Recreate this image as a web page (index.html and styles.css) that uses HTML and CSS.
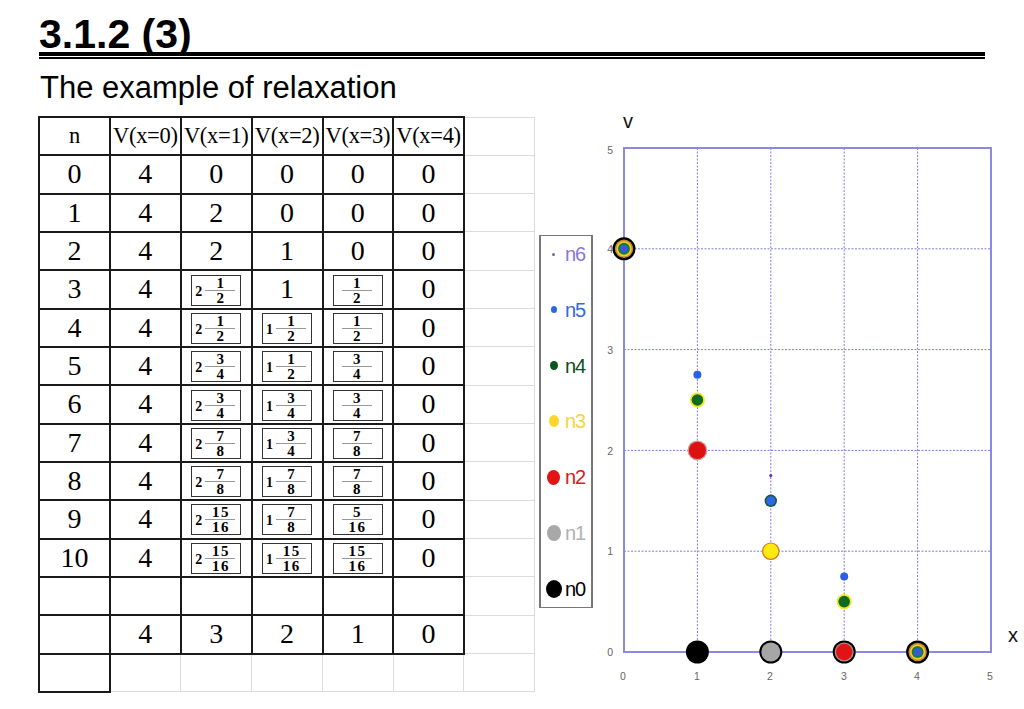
FILE: index.html
```html
<!DOCTYPE html>
<html>
<head>
<meta charset="utf-8">
<link rel="stylesheet" href="styles.css">
</head>
<body>
<header class="header">
  <h1 class="title">3.1.2 (3)</h1>
  <div class="rule"></div>
  <p class="subtitle">The example of relaxation</p>
</header>
<main class="main">
  <table class="grid">
    <colgroup>
      <col class="c71"><col class="c71"><col class="c71"><col class="c71"><col class="c70"><col class="c71"><col class="c70">
    </colgroup>
    <tr class="head"><td>n</td><td>V(x=0)</td><td>V(x=1)</td><td>V(x=2)</td><td>V(x=3)</td><td>V(x=4)</td><td class="faint"></td></tr>
    <tr><td>0</td><td>4</td><td>0</td><td>0</td><td>0</td><td>0</td><td class="faint"></td></tr>
    <tr><td>1</td><td>4</td><td>2</td><td>0</td><td>0</td><td>0</td><td class="faint"></td></tr>
    <tr><td>2</td><td>4</td><td>2</td><td>1</td><td>0</td><td>0</td><td class="faint"></td></tr>
    <tr><td>3</td><td>4</td>
      <td><span class="fbox"><span class="whole">2</span><span class="frac"><span class="num">1</span><span class="den">2</span></span></span></td>
      <td>1</td>
      <td><span class="fbox"><span class="frac"><span class="num">1</span><span class="den">2</span></span></span></td>
      <td>0</td><td class="faint"></td></tr>
    <tr><td>4</td><td>4</td>
      <td><span class="fbox"><span class="whole">2</span><span class="frac"><span class="num">1</span><span class="den">2</span></span></span></td>
      <td><span class="fbox"><span class="whole">1</span><span class="frac"><span class="num">1</span><span class="den">2</span></span></span></td>
      <td><span class="fbox"><span class="frac"><span class="num">1</span><span class="den">2</span></span></span></td>
      <td>0</td><td class="faint"></td></tr>
    <tr><td>5</td><td>4</td>
      <td><span class="fbox"><span class="whole">2</span><span class="frac"><span class="num">3</span><span class="den">4</span></span></span></td>
      <td><span class="fbox"><span class="whole">1</span><span class="frac"><span class="num">1</span><span class="den">2</span></span></span></td>
      <td><span class="fbox"><span class="frac"><span class="num">3</span><span class="den">4</span></span></span></td>
      <td>0</td><td class="faint"></td></tr>
    <tr><td>6</td><td>4</td>
      <td><span class="fbox"><span class="whole">2</span><span class="frac"><span class="num">3</span><span class="den">4</span></span></span></td>
      <td><span class="fbox"><span class="whole">1</span><span class="frac"><span class="num">3</span><span class="den">4</span></span></span></td>
      <td><span class="fbox"><span class="frac"><span class="num">3</span><span class="den">4</span></span></span></td>
      <td>0</td><td class="faint"></td></tr>
    <tr><td>7</td><td>4</td>
      <td><span class="fbox"><span class="whole">2</span><span class="frac"><span class="num">7</span><span class="den">8</span></span></span></td>
      <td><span class="fbox"><span class="whole">1</span><span class="frac"><span class="num">3</span><span class="den">4</span></span></span></td>
      <td><span class="fbox"><span class="frac"><span class="num">7</span><span class="den">8</span></span></span></td>
      <td>0</td><td class="faint"></td></tr>
    <tr><td>8</td><td>4</td>
      <td><span class="fbox"><span class="whole">2</span><span class="frac"><span class="num">7</span><span class="den">8</span></span></span></td>
      <td><span class="fbox"><span class="whole">1</span><span class="frac"><span class="num">7</span><span class="den">8</span></span></span></td>
      <td><span class="fbox"><span class="frac"><span class="num">7</span><span class="den">8</span></span></span></td>
      <td>0</td><td class="faint"></td></tr>
    <tr><td>9</td><td>4</td>
      <td><span class="fbox"><span class="whole">2</span><span class="frac"><span class="num">15</span><span class="den">16</span></span></span></td>
      <td><span class="fbox"><span class="whole">1</span><span class="frac"><span class="num">7</span><span class="den">8</span></span></span></td>
      <td><span class="fbox"><span class="frac"><span class="num">5</span><span class="den">16</span></span></span></td>
      <td>0</td><td class="faint"></td></tr>
    <tr><td>10</td><td>4</td>
      <td><span class="fbox"><span class="whole">2</span><span class="frac"><span class="num">15</span><span class="den">16</span></span></span></td>
      <td><span class="fbox"><span class="whole">1</span><span class="frac"><span class="num">15</span><span class="den">16</span></span></span></td>
      <td><span class="fbox"><span class="frac"><span class="num">15</span><span class="den">16</span></span></span></td>
      <td>0</td><td class="faint"></td></tr>
    <tr><td></td><td></td><td></td><td></td><td></td><td></td><td class="faint"></td></tr>
    <tr><td></td><td>4</td><td>3</td><td>2</td><td>1</td><td>0</td><td class="faint"></td></tr>
    <tr><td></td><td class="faint"></td><td class="faint"></td><td class="faint"></td><td class="faint"></td><td class="faint"></td><td class="faint"></td></tr>
  </table>

  <ul class="legend">
    <li class="item n6"><span class="dot-slot"><span class="dot"></span></span><span class="lbl">n6</span></li>
    <li class="item n5"><span class="dot-slot"><span class="dot"></span></span><span class="lbl">n5</span></li>
    <li class="item n4"><span class="dot-slot"><span class="dot"></span></span><span class="lbl">n4</span></li>
    <li class="item n3"><span class="dot-slot"><span class="dot"></span></span><span class="lbl">n3</span></li>
    <li class="item n2"><span class="dot-slot"><span class="dot"></span></span><span class="lbl">n2</span></li>
    <li class="item n1"><span class="dot-slot"><span class="dot"></span></span><span class="lbl">n1</span></li>
    <li class="item n0"><span class="dot-slot"><span class="dot"></span></span><span class="lbl">n0</span></li>
  </ul>

  <svg class="chart" width="434" height="590" viewBox="590 110 434 590" xmlns="http://www.w3.org/2000/svg">
    <g class="gridlines">
      <line x1="695.4" y1="148" x2="695.4" y2="652"/>
      <line x1="768.8" y1="148" x2="768.8" y2="652"/>
      <line x1="842.2" y1="148" x2="842.2" y2="652"/>
      <line x1="915.6" y1="148" x2="915.6" y2="652"/>
      <line x1="622" y1="248.8" x2="989" y2="248.8"/>
      <line x1="622" y1="349.6" x2="989" y2="349.6"/>
      <line x1="622" y1="450.4" x2="989" y2="450.4"/>
      <line x1="622" y1="551.2" x2="989" y2="551.2"/>
    </g>
    <rect class="frame" x="622" y="148" width="367" height="504"/>
    <g class="ticks">
      <text x="611" y="154" text-anchor="end">5</text>
      <text x="611" y="253" text-anchor="end">4</text>
      <text x="611" y="354" text-anchor="end">3</text>
      <text x="611" y="455" text-anchor="end">2</text>
      <text x="611" y="555" text-anchor="end">1</text>
      <text x="611" y="656" text-anchor="end">0</text>
      <text x="621" y="680" text-anchor="middle">0</text>
      <text x="695" y="680" text-anchor="middle">1</text>
      <text x="768" y="680" text-anchor="middle">2</text>
      <text x="842" y="680" text-anchor="middle">3</text>
      <text x="915" y="680" text-anchor="middle">4</text>
      <text x="988" y="680" text-anchor="middle">5</text>
    </g>
    <text class="axis" x="626" y="128" text-anchor="middle">v</text>
    <text class="axis" x="1011" y="642" text-anchor="middle">x</text>

    <!-- (0,4) all nodes -->
    <circle cx="622" cy="248.8" r="11.5" fill="#000"/>
    <circle cx="622" cy="248.8" r="9.2" fill="#c98a3a"/>
    <circle cx="622" cy="248.8" r="7.6" fill="#f2d21e"/>
    <circle cx="622" cy="248.8" r="6" fill="#1f7a3a"/>
    <circle cx="622" cy="248.8" r="3.8" fill="#2a5fe6"/>
    <circle cx="622" cy="248.8" r="1.4" fill="#6a40c0"/>
    <!-- (4,0) -->
    <circle cx="915.6" cy="652" r="11.5" fill="#000"/>
    <circle cx="915.6" cy="652" r="9.2" fill="#c98a3a"/>
    <circle cx="915.6" cy="652" r="7.6" fill="#f2d21e"/>
    <circle cx="915.6" cy="652" r="6" fill="#1f7a3a"/>
    <circle cx="915.6" cy="652" r="3.8" fill="#2a5fe6"/>
    <circle cx="915.6" cy="652" r="1.4" fill="#6a40c0"/>
    <!-- (1,0) n0 -->
    <circle cx="695.4" cy="652" r="11.5" fill="#000"/>
    <!-- (2,0) n0 n1 -->
    <circle cx="768.8" cy="652" r="11.5" fill="#000"/>
    <circle cx="768.8" cy="652" r="9.5" fill="#a6a6a6"/>
    <!-- (3,0) n0 n1 n2 -->
    <circle cx="842.2" cy="652" r="11.5" fill="#000"/>
    <circle cx="842.2" cy="652" r="9.5" fill="#b08a8a"/>
    <circle cx="842.2" cy="652" r="8.2" fill="#e01414"/>
    <!-- (1,2) n1 n2 -->
    <circle cx="695.4" cy="450.4" r="10" fill="#c8a0a0"/>
    <circle cx="695.4" cy="450.4" r="8.6" fill="#de1010"/>
    <!-- (1,2.5) n3 n4 -->
    <circle cx="695.4" cy="400" r="7.6" fill="#f5ea20"/>
    <circle cx="695.4" cy="400" r="5.8" fill="#0f6a22"/>
    <!-- (1,2.75) n5 -->
    <circle cx="695.4" cy="374.8" r="4" fill="#2a5fe6"/>
    <!-- (2,1) n2 n3 -->
    <circle cx="768.8" cy="551.2" r="8.8" fill="#e0701a"/>
    <circle cx="768.8" cy="551.2" r="7.6" fill="#ffea10"/>
    <!-- (2,1.5) n4 n5 -->
    <circle cx="768.8" cy="500.8" r="6.2" fill="#1a5a3a"/>
    <circle cx="768.8" cy="500.8" r="4.6" fill="#2a6ae8"/>
    <!-- (2,1.75) n6 -->
    <circle cx="768.8" cy="475.6" r="1.6" fill="#6a30c8"/>
    <!-- (3,0.5) n3 n4 -->
    <circle cx="842.2" cy="601.6" r="7.6" fill="#f5ea20"/>
    <circle cx="842.2" cy="601.6" r="5.8" fill="#0f6a22"/>
    <!-- (3,0.75) n5 -->
    <circle cx="842.2" cy="576.4" r="4" fill="#2a5fe6"/>
  </svg>
</main>
</body>
</html>
```

FILE: styles.css
```css
html, body {
  margin: 0;
  padding: 0;
  background: #fff;
}
body {
  width: 1024px;
  height: 709px;
  overflow: hidden;
  font-family: "Liberation Sans", Arial, sans-serif;
  color: #000;
}
.header {
  margin: 0 39px 0 39px;
}
.title {
  margin: 0;
  padding-top: 17px;
  font-size: 41px;
  line-height: 35px;
  font-weight: bold;
  white-space: nowrap;
}
.rule {
  height: 1px;
  border-top: 4px solid #000;
  border-bottom: 2px solid #000;
}
.subtitle {
  margin: 11px 0 0 1px;
  font-size: 31px;
  line-height: 36px;
  font-weight: normal;
}
.main {
  display: flex;
  align-items: flex-start;
  margin-top: 10px;
}
.grid {
  margin-left: 38px;
  border-collapse: collapse;
  table-layout: fixed;
  width: 495px;
  font-family: "Liberation Serif", "Times New Roman", serif;
  flex: none;
}
.c71 { width: 70.9px; }
.c70 { width: 70.5px; }
.grid tr {
  height: 38.33px;
}
.grid td {
  border: 2px solid #1a1a1a;
  padding: 0;
  text-align: center;
  vertical-align: middle;
  font-size: 28px;
  line-height: 1;
  overflow: hidden;
}
.grid .head td {
  font-size: 22.5px;
  letter-spacing: -0.3px;
  white-space: nowrap;
}
.grid td.faint {
  border: 1px solid #dcdcdc;
}
.fbox {
  display: inline-flex;
  align-items: center;
  justify-content: center;
  box-sizing: border-box;
  width: 50px;
  height: 31px;
  border: 1px solid #333;
  gap: 3px;
  vertical-align: middle;
  padding-right: 2px;
}
.whole {
  font-size: 14px;
  line-height: 14px;
  margin-top: 3px;
  font-weight: bold;
}
.frac {
  display: inline-flex;
  flex-direction: column;
  align-items: center;
  min-width: 30px;
}
.num, .den {
  font-size: 15px;
  line-height: 14px;
  font-weight: bold;
  letter-spacing: 1.5px;
  padding-left: 1.5px;
}
.num {
  border-bottom: 1px solid #999;
  align-self: stretch;
  text-align: center;
}
.legend {
  list-style: none;
  margin: 119px 0 0 4px;
  padding: 8px 0 5px 0;
  width: 54px;
  box-sizing: border-box;
  height: 373px;
  border: 2px solid #777;
  border-top-width: 1px;
  border-bottom-width: 1px;
  display: flex;
  flex-direction: column;
  gap: 35.8px;
  flex: none;
}
.item {
  display: flex;
  align-items: center;
  height: 20px;
}
.dot-slot {
  width: 18px;
  margin-left: 4px;
  display: flex;
  justify-content: center;
  align-items: center;
}
.dot {
  display: block;
  border-radius: 50%;
}
.lbl {
  margin-left: 2px;
  font-size: 20px;
  line-height: 20px;
  letter-spacing: -1px;
}
.n6 .dot { width: 3px; height: 3px; background: #7a62c8; }
.n6 .lbl { color: #8a78d8; }
.n5 .dot { width: 6px; height: 7px; background: #2a66ea; }
.n5 .lbl { color: #2f6ae6; }
.n4 .dot { width: 8px; height: 9px; background: #0c5520; }
.n4 .lbl { color: #0c4f1c; }
.n3 .dot { width: 10px; height: 12px; background: #ffd52c; }
.n3 .lbl { color: #f2d63c; }
.n2 .dot { width: 13px; height: 15px; background: #e01414; }
.n2 .lbl { color: #dc1a1a; }
.n1 .dot { width: 14px; height: 16px; background: #a8a8a8; }
.n1 .lbl { color: #b2b2b2; }
.n0 .dot { width: 16px; height: 18px; background: #000; }
.n0 .lbl { color: #000; }
.chart {
  display: block;
  flex: none;
  margin-top: -6px;
  margin-left: -1px;
}
.gridlines line {
  stroke: #7c7ce0;
  stroke-width: 1;
  stroke-dasharray: 2 1.5;
}
.frame {
  fill: none;
  stroke: #8a8ae6;
  stroke-width: 2;
}
.ticks text {
  font-family: "Liberation Sans", Arial, sans-serif;
  font-size: 10.5px;
  fill: #666;
}
.axis {
  font-family: "Liberation Sans", Arial, sans-serif;
  font-size: 20px;
  fill: #111;
}
```
